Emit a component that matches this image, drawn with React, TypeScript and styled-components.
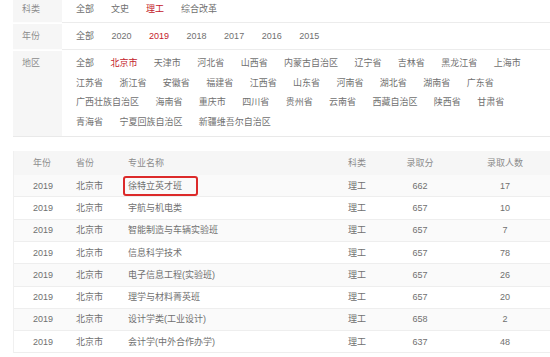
import React from "react";
import styled, { createGlobalStyle } from "styled-components";

const GlobalStyle = createGlobalStyle`
  html, body { margin: 0; padding: 0; background: #fff; }
  body {
    width: 550px;
    height: 357px;
    overflow: hidden;
    font-family: "Liberation Sans", "Noto Sans CJK SC", sans-serif;
    font-size: 9px;
    color: #707070;
  }
`;

const Page = styled.div`
  padding-left: 13px;
  width: 553px;
`;

const FilterPanel = styled.div`
  margin-top: -3px;
  width: 537px;
  display: flex;
  flex-direction: column;
`;

const FilterRow = styled.div<{ $last?: boolean }>`
  display: grid;
  grid-template-columns: 49px 1fr;
  border-bottom: 1px solid ${(p) => (p.$last ? "#e9e9e9" : "transparent")};
`;

const FilterLabel = styled.div<{ $last?: boolean }>`
  background: #f6f6f6;
  color: #8c8c8c;
  padding: 7px 0 8px 9px;
  line-height: 10px;
  border-bottom: 1px solid ${(p) => (p.$last ? "transparent" : "#fdfdfd")};
`;

const FilterValues = styled.div<{ $last?: boolean; $gap: number }>`
  display: flex;
  flex-wrap: wrap;
  column-gap: ${(p) => p.$gap}px;
  row-gap: 9.7px;
  padding: 7px 8px 8px 14px;
  line-height: 10px;
  border-bottom: 1px solid ${(p) => (p.$last ? "transparent" : "#ececec")};
`;

const Option = styled.span<{ $active?: boolean }>`
  color: ${(p) => (p.$active ? "#c3202b" : "#707070")};
  white-space: nowrap;
`;

const Table = styled.div`
  margin-top: 14px;
  border-left: 1px solid #f0f0f0;
  display: flex;
  flex-direction: column;
`;

const cols = "19px 43px 52px 220px 48px 48px 122px";

const HeaderRow = styled.div`
  display: grid;
  grid-template-columns: ${cols};
  height: 24px;
  align-items: center;
  background: #f6f6f6;
  color: #8c8c8c;
`;

const BodyRow = styled.div<{ $odd?: boolean }>`
  display: grid;
  grid-template-columns: ${cols};
  height: 21.3px;
  align-items: center;
  background: ${(p) => (p.$odd ? "#fafafa" : "#fff")};
  border-bottom: 1px solid #eeeeee;
`;

const Cell = styled.div<{ $center?: boolean }>`
  text-align: ${(p) => (p.$center ? "center" : "left")};
  white-space: nowrap;
  line-height: 10px;
`;

const Spacer = styled.div``;

const Highlight = styled.span`
  display: inline-flex;
  align-items: center;
  height: 16px;
  margin-left: -5px;
  padding: 0 14px 0 3px;
  border: 2px solid #dc2a2a;
  border-radius: 3px;
`;

const filters: { label: string; options: string[]; active: string; gap: number }[] = [
  { label: "科类", options: ["全部", "文史", "理工", "综合改革"], active: "理工", gap: 17 },
  {
    label: "年份",
    options: ["全部", "2020", "2019", "2018", "2017", "2016", "2015"],
    active: "2019",
    gap: 17.5,
  },
  {
    label: "地区",
    options: [
      "全部", "北京市", "天津市", "河北省", "山西省", "内蒙古自治区", "辽宁省", "吉林省", "黑龙江省", "上海市",
      "江苏省", "浙江省", "安徽省", "福建省", "江西省", "山东省", "河南省", "湖北省", "湖南省", "广东省",
      "广西壮族自治区", "海南省", "重庆市", "四川省", "贵州省", "云南省", "西藏自治区", "陕西省", "甘肃省",
      "青海省", "宁夏回族自治区", "新疆维吾尔自治区",
    ],
    active: "北京市",
    gap: 16.4,
  },
];

const rows: [string, string, string, string, string, string][] = [
  ["2019", "北京市", "徐特立英才班", "理工", "662", "17"],
  ["2019", "北京市", "宇航与机电类", "理工", "657", "10"],
  ["2019", "北京市", "智能制造与车辆实验班", "理工", "657", "7"],
  ["2019", "北京市", "信息科学技术", "理工", "657", "78"],
  ["2019", "北京市", "电子信息工程(实验班)", "理工", "657", "26"],
  ["2019", "北京市", "理学与材料菁英班", "理工", "657", "20"],
  ["2019", "北京市", "设计学类(工业设计)", "理工", "658", "2"],
  ["2019", "北京市", "会计学(中外合作办学)", "理工", "637", "48"],
];

export default function App() {
  return (
    <>
      <GlobalStyle />
      <Page>
        <FilterPanel>
          {filters.map((f, i) => {
            const last = i === filters.length - 1;
            return (
              <FilterRow key={f.label} $last={last}>
                <FilterLabel $last={last}>{f.label}</FilterLabel>
                <FilterValues $last={last} $gap={f.gap}>
                  {f.options.map((o) => (
                    <Option key={o} $active={o === f.active}>
                      {o}
                    </Option>
                  ))}
                </FilterValues>
              </FilterRow>
            );
          })}
        </FilterPanel>
        <Table>
          <HeaderRow>
            <Spacer />
            <Cell>年份</Cell>
            <Cell>省份</Cell>
            <Cell>专业名称</Cell>
            <Cell>科类</Cell>
            <Cell $center>录取分</Cell>
            <Cell $center>录取人数</Cell>
          </HeaderRow>
          {rows.map((r, i) => (
            <BodyRow key={r[2]} $odd={i % 2 === 0}>
              <Spacer />
              <Cell>{r[0]}</Cell>
              <Cell>{r[1]}</Cell>
              <Cell>{i === 0 ? <Highlight>{r[2]}</Highlight> : r[2]}</Cell>
              <Cell>{r[3]}</Cell>
              <Cell $center>{r[4]}</Cell>
              <Cell $center>{r[5]}</Cell>
            </BodyRow>
          ))}
        </Table>
      </Page>
    </>
  );
}
